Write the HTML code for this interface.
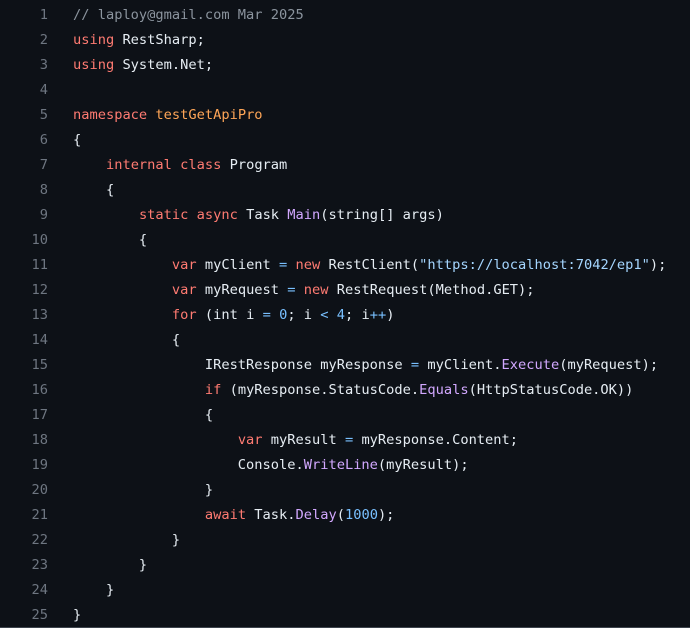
<!DOCTYPE html><html><head><style>
html,body{margin:0;padding:0;background:#0d1117;}
body{width:690px;height:628px;overflow:hidden;position:relative;border-bottom:1px solid #3d444d;box-sizing:border-box;}
.w{position:absolute;top:3px;left:0;font-family:"DejaVu Sans Mono","Liberation Mono",monospace;font-size:13.7px;line-height:25px;color:#e6edf3;}
.r{display:flex;height:25px}
.r>span{white-space:pre}
.n{width:48px;text-align:right;color:#6e7681;padding-right:25px;}
.k{color:#ff7b72}.c{color:#8b949e}.s{color:#a5d6ff}.f{color:#d2a8ff}.m{color:#79c0ff}.o{color:#ffa657}
</style></head><body><div class="w"><div class="r"><span class="n">1</span><span><span class="c">// laploy@gmail.com Mar 2025</span></span></div><div class="r"><span class="n">2</span><span><span class="k">using</span> RestSharp;</span></div><div class="r"><span class="n">3</span><span><span class="k">using</span> System.Net;</span></div><div class="r"><span class="n">4</span><span></span></div><div class="r"><span class="n">5</span><span><span class="k">namespace</span> <span class="o">testGetApiPro</span></span></div><div class="r"><span class="n">6</span><span>{</span></div><div class="r"><span class="n">7</span><span>    <span class="k">internal</span> <span class="k">class</span> Program</span></div><div class="r"><span class="n">8</span><span>    {</span></div><div class="r"><span class="n">9</span><span>        <span class="k">static</span> <span class="k">async</span> Task <span class="f">Main</span>(string[] args)</span></div><div class="r"><span class="n">10</span><span>        {</span></div><div class="r"><span class="n">11</span><span>            <span class="k">var</span> myClient <span class="m">=</span> <span class="k">new</span> RestClient(<span class="s">"https://localhost:7042/ep1"</span>);</span></div><div class="r"><span class="n">12</span><span>            <span class="k">var</span> myRequest <span class="m">=</span> <span class="k">new</span> RestRequest(Method.GET);</span></div><div class="r"><span class="n">13</span><span>            <span class="k">for</span> (int i <span class="m">=</span> <span class="m">0</span>; i <span class="m">&lt;</span> <span class="m">4</span>; i<span class="m">++</span>)</span></div><div class="r"><span class="n">14</span><span>            {</span></div><div class="r"><span class="n">15</span><span>                IRestResponse myResponse <span class="m">=</span> myClient.<span class="f">Execute</span>(myRequest);</span></div><div class="r"><span class="n">16</span><span>                <span class="k">if</span> (myResponse.StatusCode.<span class="f">Equals</span>(HttpStatusCode.OK))</span></div><div class="r"><span class="n">17</span><span>                {</span></div><div class="r"><span class="n">18</span><span>                    <span class="k">var</span> myResult <span class="m">=</span> myResponse.Content;</span></div><div class="r"><span class="n">19</span><span>                    Console.<span class="f">WriteLine</span>(myResult);</span></div><div class="r"><span class="n">20</span><span>                }</span></div><div class="r"><span class="n">21</span><span>                <span class="k">await</span> Task.<span class="f">Delay</span>(<span class="m">1000</span>);</span></div><div class="r"><span class="n">22</span><span>            }</span></div><div class="r"><span class="n">23</span><span>        }</span></div><div class="r"><span class="n">24</span><span>    }</span></div><div class="r"><span class="n">25</span><span>}</span></div></div></body></html>
